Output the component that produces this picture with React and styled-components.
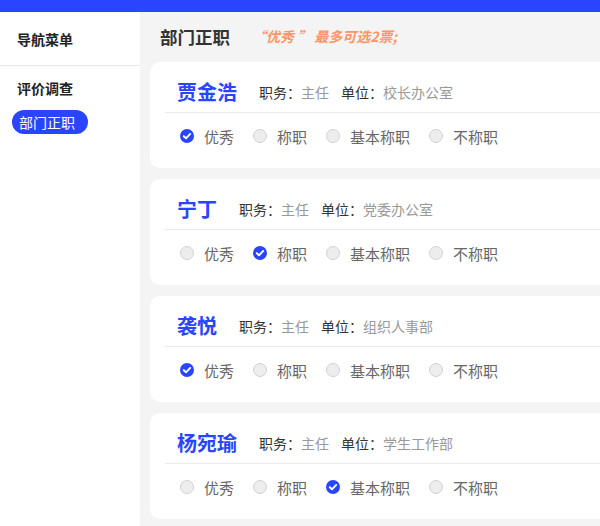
import React from 'react';
import styled, { createGlobalStyle } from 'styled-components';

const BLUE = '#2a45ff';

const GlobalStyle = createGlobalStyle`
  html, body {
    margin: 0;
    padding: 0;
    background: #f4f4f4;
    overflow: hidden;
  }
  * {
    box-sizing: border-box;
  }
  body {
    font-family: "Noto Sans CJK SC", "Noto Sans", sans-serif;
  }
`;

const people = [
  { name: '贾金浩', duty: '主任', unit: '校长办公室', choice: 0 },
  { name: '宁丁', duty: '主任', unit: '党委办公室', choice: 1 },
  { name: '袭悦', duty: '主任', unit: '组织人事部', choice: 0 },
  { name: '杨宛瑜', duty: '主任', unit: '学生工作部', choice: 2 },
];

const options = ['优秀', '称职', '基本称职', '不称职'];

const CheckDot = () => (
  <svg width="14" height="14" viewBox="0 0 14 14">
    <circle cx="7" cy="7" r="7" fill={BLUE} />
    <path
      d="M3.8 7.2 L6 9.3 L10.2 4.9"
      fill="none"
      stroke="#fff"
      strokeWidth="1.9"
      strokeLinecap="round"
      strokeLinejoin="round"
    />
  </svg>
);

const App = () => {
  return (
    <Page>
      <GlobalStyle />
      <TopBar />
      <Body>
        <Sidebar>
          <NavTitle>导航菜单</NavTitle>
          <NavGroup>
            <NavTitle>评价调查</NavTitle>
            <NavPill>部门正职</NavPill>
          </NavGroup>
        </Sidebar>
        <Main>
          <MainHeader>
            <MainTitle>部门正职</MainTitle>
            <Hint>“优秀 ” 最多可选2票;</Hint>
          </MainHeader>
          {people.map((p) => (
            <Card key={p.name}>
              <CardHead>
                <Name>{p.name}</Name>
                <InfoLabel>职务：</InfoLabel>
                <InfoValue>{p.duty}</InfoValue>
                <InfoLabel>单位：</InfoLabel>
                <InfoValue>{p.unit}</InfoValue>
              </CardHead>
              <RadioRow>
                {options.map((opt, i) => (
                  <RadioItem key={opt}>
                    {p.choice === i ? <CheckDot /> : <EmptyDot />}
                    <RadioText>{opt}</RadioText>
                  </RadioItem>
                ))}
              </RadioRow>
            </Card>
          ))}
        </Main>
      </Body>
    </Page>
  );
};

export default App;

const Page = styled.div`
  width: 600px;
  height: 526px;
  overflow: hidden;
  display: flex;
  flex-direction: column;
  background: #f4f4f4;
`;

const TopBar = styled.div`
  height: 12px;
  flex-shrink: 0;
  background: ${BLUE};
`;

const Body = styled.div`
  flex: 1;
  display: flex;
`;

//////////////////////// sidebar //////////////////////////

const Sidebar = styled.aside`
  width: 140px;
  flex-shrink: 0;
  background: #fff;
  display: flex;
  flex-direction: column;
`;

const NavTitle = styled.div`
  height: 54px;
  padding-left: 17px;
  display: flex;
  align-items: center;
  font-size: 14px;
  font-weight: 700;
  color: #222;
  border-bottom: 1px solid #e6e6e6;
`;

const NavGroup = styled.div`
  display: flex;
  flex-direction: column;
  align-items: flex-start;

  ${NavTitle} {
    height: 44px;
    border-bottom: none;
    align-self: stretch;
  }
`;

const NavPill = styled.div`
  margin-left: 12px;
  height: 24px;
  padding: 0 13px 0 7px;
  display: flex;
  align-items: center;
  border-radius: 12px;
  background: ${BLUE};
  color: #fff;
  font-size: 14px;
`;

//////////////////////// main //////////////////////////

const Main = styled.main`
  flex: 1;
  padding-left: 10px;
  display: flex;
  flex-direction: column;
  gap: 11px;
`;

const MainHeader = styled.div`
  height: 50px;
  padding: 0 0 2px 10px;
  margin-bottom: -11px;
  display: flex;
  align-items: center;
  gap: 22px;
`;

const MainTitle = styled.h1`
  margin: 0;
  font-size: 17.5px;
  font-weight: 700;
  color: #333;
`;

const Hint = styled.span`
  font-size: 14px;
  font-weight: 700;
  font-style: italic;
  color: #fd9466;
  white-space: pre;
`;

//////////////////////// card //////////////////////////

const Card = styled.section`
  width: 480px;
  flex-shrink: 0;
  background: #fff;
  border-radius: 10px;
  padding: 0 15px 9px;
`;

const CardHead = styled.div`
  height: 51px;
  padding: 9px 12px 0;
  display: flex;
  align-items: center;
  border-bottom: 1px solid #ebebeb;
  font-size: 14px;
  white-space: nowrap;
`;

const Name = styled.span`
  font-size: 20px;
  font-weight: 700;
  color: ${BLUE};
  margin-right: 22px;
`;

const InfoLabel = styled.span`
  color: #333;
`;

const InfoValue = styled.span`
  color: #999;
  margin-right: 12px;
`;

const RadioRow = styled.div`
  height: 46px;
  padding-left: 15px;
  display: flex;
  align-items: center;
  gap: 19px;
`;

const RadioItem = styled.label`
  display: flex;
  align-items: center;
  gap: 10px;
  cursor: pointer;
`;

const EmptyDot = styled.span`
  width: 14px;
  height: 14px;
  border-radius: 50%;
  background: #ededed;
  border: 1px solid #d2d2d2;
`;

const RadioText = styled.span`
  font-size: 15px;
  color: #666;
`;
